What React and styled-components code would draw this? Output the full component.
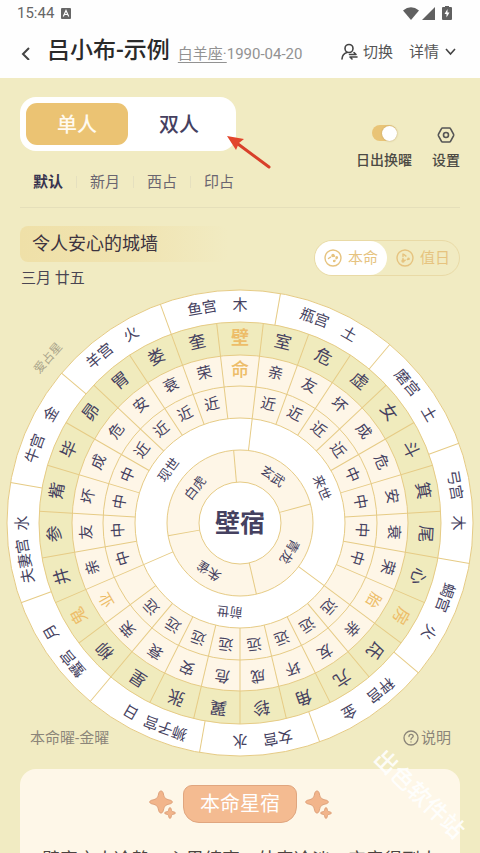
import React from "react";
import styled, { createGlobalStyle } from "styled-components";

const Global = createGlobalStyle`
  * { box-sizing: border-box; }
  html, body { margin: 0; height: 100%; }
  body {
    background: #f1ebc2;
    font-family: Roboto, "Noto Sans CJK SC", sans-serif;
    color: #333;
  }
  #root { height: 100%; }
  button, input { font: inherit; color: inherit; }
`;

const Screen = styled.div`
  position: relative;
  height: 100%;
  min-height: 640px;
  overflow: hidden;
`;

const Header = styled.header`
  background: #fefefe;
  height: 78px;
  display: flex;
  flex-direction: column;
`;

const StatusBar = styled.div`
  height: 26px;
  padding: 0 28px 0 17px;
  display: flex;
  align-items: center;
  gap: 7px;
  font-size: 15px;
  color: #666;
  svg { display: block; }
`;

const Spacer = styled.span`
  flex: 1;
`;

const StatusIcons = styled.span`
  display: flex;
  align-items: center;
  gap: 3px;
`;

const TitleBar = styled.div`
  flex: 1;
  padding: 0 24px 0 20px;
  display: flex;
  align-items: center;
  white-space: nowrap;
`;

const PlainButton = styled.button`
  border: 0;
  background: none;
  padding: 0;
  display: flex;
  align-items: center;
  gap: ${(p) => p.$gap || 0}px;
  font-size: 15px;
  line-height: 20px;
  color: #555;
  cursor: pointer;
`;

const Title = styled.h1`
  margin: 0 8px 2px 15px;
  font-size: 23px;
  line-height: 28px;
  font-weight: 500;
  color: #2a2a2a;
`;

const Birth = styled.span`
  font-size: 15px;
  line-height: 22px;
  padding-top: 4px;
  color: #929292;
  a { color: inherit; text-underline-offset: 3px; }
`;

const HeaderActions = styled.div`
  margin-left: auto;
  display: flex;
  gap: 16px;
`;

const Main = styled.main`
  padding-top: 19px;
`;

const Controls = styled.section`
  margin: 0 20px;
  padding-bottom: 19px;
  border-bottom: 1px solid #e5dfba;
`;

const ControlRow = styled.div`
  display: flex;
  justify-content: space-between;
  align-items: flex-start;
`;

const ModeSwitch = styled.div`
  display: flex;
  width: 216px;
  height: 54px;
  padding: 6px;
  border-radius: 16px;
  background: #fff;
`;

const ModeButton = styled.button`
  flex: 1;
  border: 0;
  border-radius: 11px;
  padding: 0 0 2px;
  font-size: 20px;
  font-weight: 500;
  color: ${(p) => (p.$active ? "#fffaf0" : "#45405f")};
  background: ${(p) => (p.$active ? "#ebc373" : "transparent")};
`;

const Tools = styled.div`
  display: flex;
  gap: 20px;
  padding-top: 26px;
`;

const toolStyles = `
  display: flex;
  flex-direction: column;
  align-items: center;
  gap: 7px;
  font-size: 14px;
  line-height: 20px;
  font-weight: 500;
  color: #4c4a44;
`;

const ToolLabel = styled.label`
  ${toolStyles}
`;

const ToolButton = styled.button`
  ${toolStyles}
  border: 0;
  padding: 0;
  background: none;
`;

const ToolIcon = styled.span`
  height: 20px;
  display: flex;
  align-items: center;
  padding-top: ${(p) => p.$drop || 0}px;
`;

const Toggle = styled.input`
  appearance: none;
  margin: 0;
  width: 25px;
  height: 16px;
  border-radius: 8px;
  background: #e9c477;
  display: flex;
  align-items: center;
  justify-content: flex-start;
  &::after {
    content: "";
    width: 15px;
    height: 15px;
    border-radius: 50%;
    background: #fff;
    box-shadow: 0 0 2px #bba26b;
  }
  &:checked { justify-content: flex-end; }
`;

const Tabs = styled.nav`
  display: flex;
  padding: 0 0 0 13px;
  margin-top: 6px;
`;

const Tab = styled.button`
  border: 0;
  background: none;
  padding: 0 13px 0 0;
  margin-right: 13px;
  border-right: 1px solid ${(p) => (p.$last ? "transparent" : "#e5e0bf")};
  font-size: 15px;
  line-height: 12px;
  font-weight: ${(p) => (p.$active ? 700 : 400)};
  color: ${(p) => (p.$active ? "#38344f" : "#6a6570")};
`;

const Summary = styled.section`
  margin: 18px 20px 0;
  display: flex;
  justify-content: space-between;
  align-items: flex-start;
`;

const Phrase = styled.h2`
  margin: 0;
  width: 208px;
  padding-left: 12px;
  border-radius: 8px;
  background: linear-gradient(90deg, #efe0a8, #f0e3b0 50%, #f1ebc2);
  font-size: 18px;
  line-height: 36px;
  font-weight: 400;
  color: #3d3440;
`;

const LunarDate = styled.p`
  margin: 5px 0 0 1px;
  font-size: 15px;
  line-height: 22px;
  color: #4a4552;
`;

const ChartSwitch = styled.div`
  margin-top: 14px;
  display: flex;
  height: 36px;
  border: 1px solid #e9daa6;
  border-radius: 18px;
`;

const ChartButton = styled.button`
  display: flex;
  align-items: center;
  gap: 6px;
  height: 34px;
  border: 0;
  border-radius: 17px;
  padding: 0 9px;
  font-size: 15px;
  line-height: 20px;
  color: #e6c37f;
  background: ${(p) => (p.$active ? "#fff" : "transparent")};
`;

const ChartArea = styled.section`
  display: grid;
  margin: 0 6px;
  & > * { grid-area: 1 / 1; }
`;

const Wheel = styled.svg`
  display: block;
  width: 100%;
  height: auto;
  text { text-anchor: middle; dominant-baseline: central; }
`;

const ChartFooter = styled.div`
  align-self: end;
  display: flex;
  justify-content: space-between;
  padding: 0 23px 8px 24px;
  font-size: 15px;
  line-height: 22px;
  color: #8b8579;
  button { color: inherit; }
`;

const Card = styled.article`
  margin: 12px 20px 0;
  height: 240px;
  padding: 16px 22px;
  border-radius: 16px;
  background: #fef7e8;
`;

const CardHead = styled.div`
  display: flex;
  justify-content: center;
  align-items: center;
  gap: 7px;
`;

const Badge = styled.h3`
  margin: 0;
  padding: 0 16px;
  border: 1px solid #e0a67f;
  border-radius: 9px 9px 16px 16px;
  background: #f4bb91;
  color: #fff;
  font-size: 20px;
  line-height: 36px;
  font-weight: 400;
`;

const CardText = styled.p`
  margin: 22px 0 0;
  font-size: 18px;
  line-height: 30px;
  white-space: nowrap;
  color: #4b4440;
`;

const Arrow = styled.svg`
  position: absolute;
  left: 226px;
  top: 133px;
`;

const Watermark = styled.div`
  position: absolute;
  right: 4px;
  bottom: 46px;
  font-size: 23px;
  line-height: 24px;
  font-weight: 500;
  color: rgba(255, 255, 255, 0.9);
  transform: rotate(44deg);
`;

const GOLD = "#e6cb85";
const INK = "#454160";
const STEP = 360 / 27;

const MANSIONS = [..."壁室危虚女斗箕尾心房氐亢角轸翼张星柳鬼井参觜毕昴胃娄奎"];
const RELATIONS = [..."命亲友坏成危安衰荣胎亲友坏成危安衰荣业亲友坏成危安衰荣"];
const DISTANCES = [..." 近近近近中中中中 远远远远远远远远 中中中中近近近近"];
const SIGNS = [
  ["鱼宫", "木"], ["瓶宫", "土"], ["磨宫", "土"], ["弓宫", "木"],
  ["蝎宫", "火"], ["秤宫", "金"], ["女宫", "水"], ["狮子宫", "日"],
  ["蟹宫", "月"], ["夫妻宫", "水"], ["牛宫", "金"], ["羊宫", "火"],
];
const LIVES = [["来世", 5], ["前世", 14], ["现世", 23]];
const BEASTS = [["玄武", 35], ["青龙", 120], ["朱雀", 213], ["白虎", 308]];

function Spoke({ angle, from, to }) {
  return <line x1="0" x2="0" y1={-from} y2={-to} stroke={GOLD} transform={`rotate(${angle})`} />;
}

function Label({ angle, r, size, children, fill = INK, weight = 400 }) {
  return (
    <text transform={`rotate(${angle}) translate(0 ${-r})`} fontSize={size} fill={fill} fontWeight={weight}>
      {children}
    </text>
  );
}

function Ring({ r, fill }) {
  return <circle r={r} fill={fill} stroke={GOLD} />;
}

function StarWheel() {
  return (
    <Wheel viewBox="-234 -234 468 468" role="img" aria-label="本命星盘">
      <Ring r={233} fill="#fff" />
      <Ring r={201} fill="#f0ebbd" />
      <Ring r={168} fill="#fef6e7" />
      <Ring r={137} fill="#fef6e7" />
      <Ring r={105} fill="#fff" />
      <Ring r={73} fill="#fef6e7" />
      <Ring r={41} fill="#fff" />
      {SIGNS.map(([sign, planet], i) => (
        <g key={sign}>
          <Spoke angle={10 + i * 30} from={201} to={233} />
          <Label angle={i * 30 - 10} r={218} size={15}>{sign}</Label>
          <Label angle={i * 30} r={218} size={15}>{planet}</Label>
        </g>
      ))}
      {MANSIONS.map((name, i) => {
        const key = i % 9 === 0;
        const a = i * STEP;
        return (
          <g key={name}>
            <Spoke angle={a + STEP / 2} from={105} to={201} />
            <Label angle={a} r={186} size={i === 0 ? 18 : 17} fill={key ? "#edbd69" : INK} weight={i === 0 ? 700 : 400}>{name}</Label>
            <Label angle={a} r={154} size={i === 0 ? 18 : 15} fill={key ? "#edbd69" : INK} weight={i === 0 ? 500 : 400}>{RELATIONS[i]}</Label>
            <Label angle={a} r={122} size={15}>{DISTANCES[i]}</Label>
          </g>
        );
      })}
      {LIVES.map(([name, i]) => (
        <g key={name}>
          <Spoke angle={(i - 4.5) * STEP} from={73} to={105} />
          <Label angle={i * STEP} r={89} size={13}>{name}</Label>
        </g>
      ))}
      {[-5, 75, 167, 260].map((a) => <Spoke key={a} angle={a} from={41} to={73} />)}
      {BEASTS.map(([name, a]) => <Label key={name} angle={a} r={57} size={13}>{name}</Label>)}
      <text fontSize="25" fontWeight="700" fill={INK}>壁宿</text>
      <text fontSize="12" fill="#aaa48a" transform="translate(-192 -165) rotate(-49)">爱占星</text>
    </Wheel>
  );
}

function OrbitIcon({ flip }) {
  return (
    <svg width="18" height="18" viewBox="0 0 18 18" fill="none" stroke="currentColor" strokeWidth="1.4" strokeLinecap="round" strokeLinejoin="round">
      <circle cx="9" cy="9" r="8" />
      {flip ? (
        <>
          <path d="M7 5v7M7 12l6-2M8 5.500l3 2.500" strokeDasharray="2.500 2" />
          <circle cx="7" cy="12" r="1" fill="currentColor" />
          <circle cx="12.500" cy="9.800" r=".5" fill="currentColor" />
        </>
      ) : (
        <>
          <path d="M4.500 9.500L9 6.500l4 2-2.500 3.500" strokeDasharray="2.500 2" />
          <circle cx="9" cy="6.500" r="1" fill="currentColor" />
          <circle cx="12.800" cy="8.600" r=".6" fill="currentColor" />
          <circle cx="10.200" cy="12" r=".6" fill="currentColor" />
        </>
      )}
    </svg>
  );
}

function Sparkle() {
  return (
    <svg width="28" height="30" viewBox="0 0 28 30" fill="#f2b58b" stroke="#dfa27b" strokeLinejoin="round" aria-hidden="true">
      <path d="M13 2c1.400 0 2 1 2.400 3 .9 4 2 5.100 6.200 6 3.600.8 3.600 3.200 0 4-4.200.9-5.300 2-6.200 6.200-.8 3.800-4 3.800-4.800 0-.9-4.200-2-5.300-6.200-6.200-3.600-.8-3.600-3.200 0-4 4.200-.9 5.300-2 6.200-6 .4-2 1-3 2.400-3z" />
      <path d="M22 18.500c1.200 0 1.200 3 1.900 3.700s3.600.700 3.600 1.800-2.900 1.100-3.600 1.800-.7 3.700-1.900 3.700-1.200-3-1.900-3.700-3.600-.7-3.600-1.800 2.900-1.100 3.600-1.800.7-3.700 1.900-3.700z" />
    </svg>
  );
}

export default function App() {
  return (
    <Screen>
      <Global />
      <Header>
        <StatusBar>
          <span>15:44</span>
          <svg width="10" height="11" viewBox="0 0 10 11">
            <rect width="10" height="11" rx="1" fill="#666" />
            <path d="M2.300 8.500L5 2.500l2.700 6M3.400 6.500h3.200" stroke="#fff" strokeWidth="1.200" fill="none" />
          </svg>
          <Spacer />
          <StatusIcons>
            <svg width="16" height="13" viewBox="0 0 16 13"><path d="M0 3.500Q8-3 16 3.500L8 13z" fill="#606060" /></svg>
            <svg width="13" height="13" viewBox="0 0 13 13"><path d="M13 0v13H0z" fill="#606060" /></svg>
          </StatusIcons>
          <svg width="10" height="14" viewBox="0 0 10 14">
            <path d="M3 0h4v1h2q1 0 1 1v11q0 1-1 1H1q-1 0-1-1V2q0-1 1-1h2z" fill="#606060" />
            <path d="M5.500 3L2.500 8H4.500v3.500L7.500 6.500H5.500z" fill="#fff" />
          </svg>
        </StatusBar>
        <TitleBar>
          <PlainButton aria-label="返回">
            <svg width="12" height="16" viewBox="0 0 12 16" fill="none" stroke="#444" strokeWidth="2"><path d="M9 4L3 10l6 6" /></svg>
          </PlainButton>
          <Title>吕小布-示例</Title>
          <Birth><a href="#sign">白羊座·</a>1990-04-20</Birth>
          <HeaderActions>
            <PlainButton $gap={5}>
              <svg width="17" height="18" viewBox="0 0 17 18" fill="none" stroke="#444" strokeWidth="1.600" strokeLinecap="round" strokeLinejoin="round">
                <circle cx="8" cy="5.500" r="4" />
                <path d="M1 16c.3-4 2-5.800 5-6.500M8.500 11.500H15l-2-2M16 14H9l2 2" />
              </svg>
              切换
            </PlainButton>
            <PlainButton $gap={6}>
              详情
              <svg width="11" height="8" viewBox="0 0 11 8" fill="none" stroke="#444" strokeWidth="1.600"><path d="M1 1l4.500 5L10 1" /></svg>
            </PlainButton>
          </HeaderActions>
        </TitleBar>
      </Header>
      <Main>
        <Controls>
          <ControlRow>
            <ModeSwitch>
              <ModeButton $active>单人</ModeButton>
              <ModeButton>双人</ModeButton>
            </ModeSwitch>
            <Tools>
              <ToolLabel>
                <ToolIcon><Toggle type="checkbox" defaultChecked /></ToolIcon>
                日出换曜
              </ToolLabel>
              <ToolButton>
                <ToolIcon $drop={4}>
                  <svg width="18" height="16" viewBox="0 0 18 16" fill="none" stroke="#555" strokeWidth="1.600" strokeLinejoin="round">
                    <path d="M5.500 1h7q.7 0 1 .6l3 5.600q.4.800 0 1.600l-3 5.600q-.3.600-1 .6h-7q-.7 0-1-.6l-3-5.600q-.4-.8 0-1.600l3-5.600q.3-.6 1-.6z" />
                    <circle cx="9" cy="8" r="2.500" />
                  </svg>
                </ToolIcon>
                设置
              </ToolButton>
            </Tools>
          </ControlRow>
          <Tabs>
            <Tab $active>默认</Tab>
            <Tab>新月</Tab>
            <Tab>西占</Tab>
            <Tab $last>印占</Tab>
          </Tabs>
        </Controls>
        <Summary>
          <div>
            <Phrase>令人安心的城墙</Phrase>
            <LunarDate>三月 廿五</LunarDate>
          </div>
          <ChartSwitch>
            <ChartButton $active><OrbitIcon />本命</ChartButton>
            <ChartButton><OrbitIcon flip />值日</ChartButton>
          </ChartSwitch>
        </Summary>
        <ChartArea>
          <StarWheel />
          <ChartFooter>
            <span>本命曜-金曜</span>
            <PlainButton $gap={2}>
              <svg width="16" height="16" viewBox="0 0 16 16" fill="none" stroke="currentColor" strokeWidth="1.300" strokeLinecap="round">
                <circle cx="8" cy="8" r="7" />
                <path d="M6 6.500c0-2.800 4.200-2.600 4.200-.2 0 1.500-2.200 1.600-2.200 3.200M8 11.800v.1" />
              </svg>
              说明
            </PlainButton>
          </ChartFooter>
        </ChartArea>
        <Card>
          <CardHead>
            <Sparkle />
            <Badge>本命星宿</Badge>
            <Sparkle />
          </CardHead>
          <CardText>壁宿之人冷静，心思缜密，外表冷淡，实意得到人</CardText>
        </Card>
      </Main>
      <Arrow width="46" height="38" viewBox="0 0 46 38" aria-hidden="true">
        <path d="M43 34L12 11" stroke="#d8402a" strokeWidth="3" strokeLinecap="round" />
        <path d="M1 3l17 3-5 4-3 7z" fill="#e2452c" />
      </Arrow>
      <Watermark>出色软件站</Watermark>
    </Screen>
  );
}
